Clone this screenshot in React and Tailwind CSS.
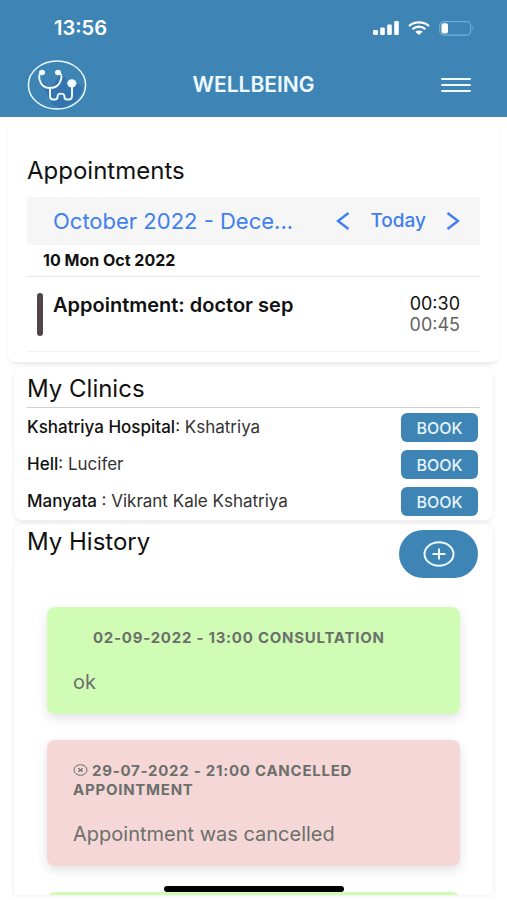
import React from 'react';

const clinics = [
  { name: 'Kshatriya Hospital', doctor: 'Kshatriya' },
  { name: 'Hell', doctor: 'Lucifer' },
  { name: 'Manyata ', doctor: 'Vikrant Kale Kshatriya' },
];

const history = [
  { date: '02-09-2022 - 13:00', title: 'Consultation', text: 'ok', cancelled: false },
  { date: '29-07-2022 - 21:00', title: 'Cancelled appointment', text: 'Appointment was cancelled', cancelled: true },
];

const Logo = () => (
  <svg width="60" height="50" viewBox="0 0 60 50" fill="none" aria-label="Wellbeing logo">
    <path d="M12 20 L24 28 L34 12 L45 26 L48 22 L56 28 C54 38 44 46 34 48 L26 45 Z" fill="#2f69a8" opacity="0.6" />
    <ellipse cx="30" cy="25" rx="28.6" ry="24" stroke="#eaf8ff" strokeWidth="1.5" />
    <g stroke="#f4fcff" strokeWidth="1.9" strokeLinecap="round" strokeLinejoin="round">
      <path d="M15 12 C11.500 13.500 12 17 12.500 19.500 C14 25.500 18.500 28 23 28 C28 28 32.500 25 34 19.500 C35 16 35 13.500 31 12" />
      <path d="M23 28 V36 Q23 39.500 26 39.500 H28 Q30.500 39.500 30.500 37 C30.500 32.500 37.500 32.500 37.500 37 Q37.500 39.500 40 39.500 H42 Q45 39.500 45 36 V25" />
    </g>
    <ellipse cx="15" cy="12.500" rx="3" ry="2.700" fill="#f4fcff" />
    <ellipse cx="31" cy="12.500" rx="3" ry="2.700" fill="#f4fcff" />
    <ellipse cx="44.800" cy="23.300" rx="4.600" ry="4" fill="#f4fcff" />
  </svg>
);

const StatusIcons = () => (
  <div className="flex items-center gap-2">
    <svg width="27" height="14" viewBox="0 0 27 14" fill="#fff">
      <rect x="0" y="9" width="5" height="5" rx="1.200" />
      <rect x="7.200" y="6.500" width="4.600" height="7.500" rx="1.200" />
      <rect x="14.200" y="3.500" width="4.600" height="10.500" rx="1.200" />
      <rect x="21.200" y="0" width="4.600" height="14" rx="1.200" />
    </svg>
    <svg width="22" height="14" viewBox="0 0 22 14" fill="none" stroke="#fff" strokeWidth="2.300">
      <path d="M1 5 C6.500 0.200 15.500 0.200 21 5" />
      <path d="M4.500 8.200 C8.500 5 13.500 5 17.500 8.200" />
      <path d="M11 14 L7.300 10.800 C9.500 9.200 12.500 9.200 14.700 10.800 Z" fill="#fff" stroke="none" />
    </svg>
    <svg width="37" height="15" viewBox="0 0 37 15" fill="none">
      <rect x="1.700" y="0.700" width="31" height="13.400" rx="4" stroke="#6fb0d8" strokeWidth="1.200" />
      <rect x="3.500" y="2.300" width="6.500" height="10.200" rx="2" fill="#fff" />
      <path d="M34.500 5.500 Q36.500 7.400 34.500 9.500 Z" fill="#6fb0d8" />
    </svg>
  </div>
);

const Header = () => (
  <header className="shrink-0 bg-[#3e85b6] text-[#eefaff]">
    <div className="flex h-14 items-center justify-between pl-[54px] pr-8">
      <span className="text-xl font-semibold text-white">13:56</span>
      <StatusIcons />
    </div>
    <div className="grid h-[61px] grid-cols-[1fr_auto_1fr] items-center px-[27px] pb-1">
      <Logo />
      <h1 className="text-[21px] font-semibold">WELLBEING</h1>
      <button type="button" aria-label="Menu" className="mr-2 justify-self-end">
        <svg width="32" height="16" viewBox="0 0 32 16" stroke="#eefaff" strokeWidth="2" strokeLinecap="round">
          <path d="M2 2 H30 M2 8 H30 M2 14 H30" />
        </svg>
      </button>
    </div>
  </header>
);

const Appointments = () => (
  <section className="mx-2 rounded-lg bg-white px-[19px] pb-2.5 pt-9 shadow-[0_4px_5px_-2px_rgba(0,0,0,0.1)]">
    <h2 className="text-2xl leading-9">Appointments</h2>
    <div className="mt-2 flex h-12 items-center bg-[#f6f6f6] pl-[26px] pr-5 text-[#3f7ff0]">
      <button type="button" className="text-left text-[22px]">October 2022 - Dece...</button>
      <div className="ml-auto flex items-center gap-5">
        <button type="button" aria-label="Previous">
          <svg width="14" height="18" viewBox="0 0 14 18" fill="none" stroke="currentColor" strokeWidth="2.400">
            <path d="M12.500 1 L2 9 L12.500 17" />
          </svg>
        </button>
        <button type="button" className="text-[19px] font-medium">Today</button>
        <button type="button" aria-label="Next">
          <svg width="14" height="18" viewBox="0 0 14 18" fill="none" stroke="currentColor" strokeWidth="2.400">
            <path d="M1.500 1 L12 9 L1.500 17" />
          </svg>
        </button>
      </div>
    </div>
    <h3 className="border-b border-[#e8e8e8] pl-4 text-base font-bold leading-[31px]">10 Mon Oct 2022</h3>
    <div className="flex h-[75px] items-start border-b border-[#f2f2f2] pl-2.5 pr-5 pt-4">
      <div className="mr-2.5 h-[43px] w-1.5 rounded-full bg-[#54454b]" />
      <p className="text-xl font-semibold leading-6">Appointment: doctor sep</p>
      <div className="ml-auto text-right text-lg leading-[21px]">
        <p>00:30</p>
        <p className="text-[#636363]">00:45</p>
      </div>
    </div>
  </section>
);

const Clinics = () => (
  <section className="mx-3.5 mt-[5px] rounded-lg bg-white px-[13px] pb-1 pt-1 shadow-[0_2px_5px_rgba(0,0,0,0.08)]">
    <h2 className="border-b border-[#cfcfcf] text-2xl leading-9">My Clinics</h2>
    <ul className="flex flex-col gap-2 pt-[5px]">
      {clinics.map((c) => (
        <li key={c.name} className="flex items-center justify-between pr-0.5 text-[17px] text-[#333]">
          <p>
            <span className="whitespace-pre font-medium text-[#111]">{c.name}</span>: {c.doctor}
          </p>
          <button type="button" className="h-[29px] w-[77px] rounded-md bg-[#3e85b6] text-base font-medium text-[#e6f4fc]">
            BOOK
          </button>
        </li>
      ))}
    </ul>
  </section>
);

const HistoryCard = ({ item }) => (
  <article className={`rounded-lg px-[26px] pb-[18px] pt-[21px] text-[#6b706b] shadow-[0_4px_12px_rgba(0,0,0,0.12)] ${item.cancelled ? 'bg-[#f5d7d7]' : 'bg-[#d0fcb5]'}`}>
    <h3 className="text-[15px] font-bold uppercase leading-[19px] tracking-wider">
      {item.cancelled ? (
        <svg className="mr-1 inline-block align-baseline" width="15" height="12" viewBox="0 0 15 12" fill="none" stroke="currentColor">
          <ellipse cx="7.500" cy="6" rx="6.500" ry="5.300" />
          <path d="M5.300 4.200 L9.700 7.800 M9.700 4.200 L5.300 7.800" strokeWidth="1.200" />
        </svg>
      ) : (
        <span className="inline-block w-5" />
      )}
      {`${item.date} ${item.title}`}
    </h3>
    <p className="mt-[21px] text-xl leading-7">{item.text}</p>
  </article>
);

const History = () => (
  <section className="mx-3.5 mt-1 min-h-0 flex-1 overflow-hidden rounded-t-lg bg-white px-[13px] shadow-[0_0_5px_rgba(0,0,0,0.08)]">
    <div className="flex items-start justify-between pr-0.5">
      <h2 className="text-2xl leading-9">My History</h2>
      <button type="button" aria-label="Add history" className="mt-1.5 flex h-12 w-[79px] items-center justify-center rounded-3xl bg-[#3e85b6]">
        <svg width="32" height="26" viewBox="0 0 32 26" fill="none" stroke="#eefaff" strokeWidth="2">
          <ellipse cx="16" cy="13" rx="14.500" ry="11.800" />
          <path d="M9.500 13 H22.500 M16 7.500 V18.500" />
        </svg>
      </button>
    </div>
    <div className="flex flex-col gap-[26px] px-5 pt-[29px]">
      {history.map((item) => (
        <HistoryCard key={item.date} item={item} />
      ))}
      <div className="h-24 rounded-lg bg-[#d0fcb5]" />
    </div>
  </section>
);

const App = () => (
  <div className="relative flex h-screen flex-col overflow-hidden bg-white pb-[5px] font-['Inter',sans-serif] text-[#111]">
    <Header />
    <main className="flex min-h-0 flex-1 flex-col">
      <Appointments />
      <Clinics />
      <History />
    </main>
    <div className="absolute bottom-2 left-1/2 h-1.5 w-[180px] -translate-x-1/2 rounded-full bg-black" />
  </div>
);

export default App;
